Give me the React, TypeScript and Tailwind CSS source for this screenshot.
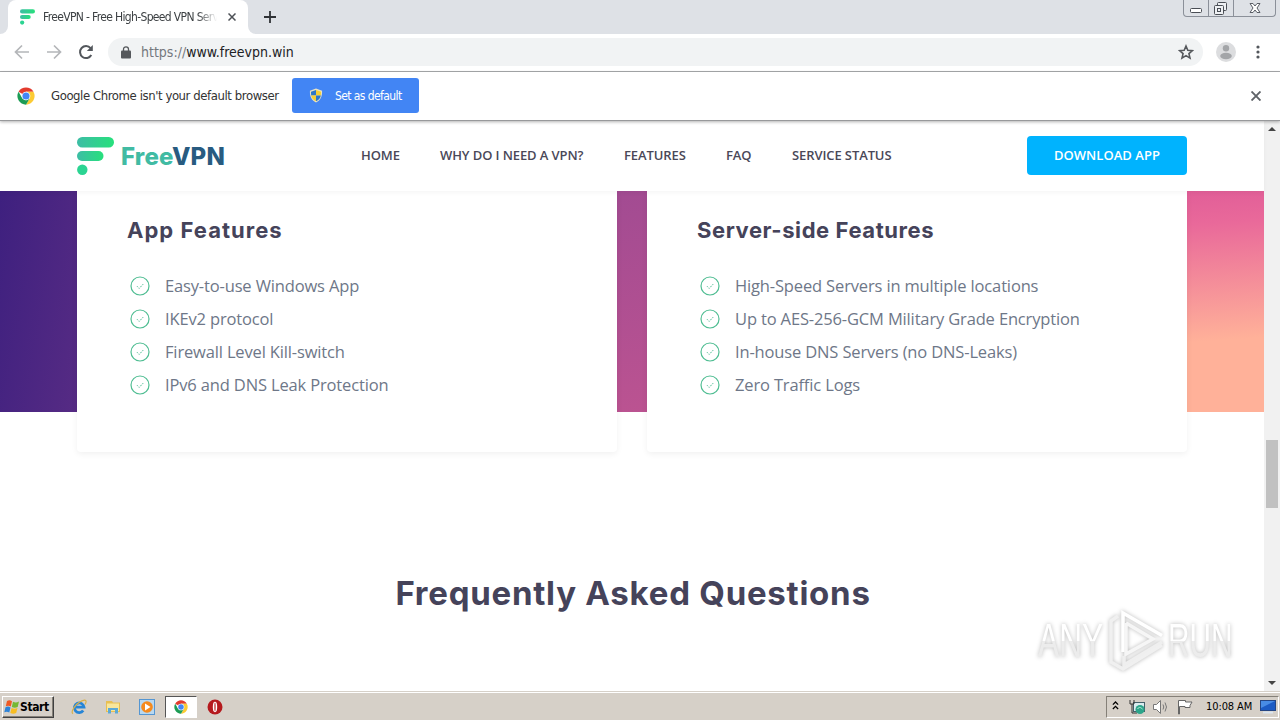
import type { ReactNode } from "react";

type FeatureCardProps = {
  title: string;
  titleClass: string;
  items: string[];
};

const NAV_ITEMS = [
  { label: "Home", className: "w-[79px]" },
  { label: "Why do I need a VPN?", className: "w-[184px]" },
  { label: "Features", className: "w-[102px]" },
  { label: "FAQ", className: "w-[66px]" },
  { label: "Service status", className: "w-[99px]" },
];

const APP_FEATURES = [
  "Easy-to-use Windows App",
  "IKEv2 protocol",
  "Firewall Level Kill-switch",
  "IPv6 and DNS Leak Protection",
];

const SERVER_FEATURES = [
  "High-Speed Servers in multiple locations",
  "Up to AES-256-GCM Military Grade Encryption",
  "In-house DNS Servers (no DNS-Leaks)",
  "Zero Traffic Logs",
];

function BrandMark({ className }: { className: string }) {
  return (
    <svg viewBox="0 0 37 38" className={className}>
      <defs>
        <linearGradient id="brand" x1="0" x2="1">
          <stop offset="0" stopColor="#3dbda5" />
          <stop offset="1" stopColor="#27e07c" />
        </linearGradient>
      </defs>
      <rect width="37" height="10.5" rx="5.2" fill="url(#brand)" />
      <rect y="14" width="26.5" height="10" rx="5" fill="url(#brand)" />
      <circle cx="5.3" cy="32.7" r="5.2" fill="#2bd492" />
    </svg>
  );
}

function ChromeLogo({ className }: { className: string }) {
  return (
    <svg viewBox="0 0 48 48" className={className}>
      <path d="M24 24 4.1 12.5A23 23 0 0 1 43.9 12.5H24z" fill="#e33b2e" />
      <path d="M24 12.5h19.9A23 23 0 0 1 24 47l10-17.2z" fill="#fccb34" />
      <path d="M4.1 12.5 14 29.8 24 35.5 34 29.8 24 47A23 23 0 0 1 4.1 12.5z" fill="#1c9c55" />
      <circle cx="24" cy="24" r="11.5" fill="#fff" />
      <circle cx="24" cy="24" r="9.5" fill="#4486f5" />
    </svg>
  );
}

function TabStrip() {
  return (
    <div className="flex h-[34px] bg-[#dee1e6]">
      <div className="h-full w-2 bg-white">
        <div className="h-full rounded-br-lg bg-[#dee1e6]" />
      </div>
      <div className="flex w-[240px] items-center rounded-t-lg bg-white pl-3">
        <BrandMark className="h-4 w-[15px]" />
        <div className="ml-2 w-[174px] text-[12px] whitespace-nowrap text-[#3c4043] [mask-image:linear-gradient(to_right,#000_155px,transparent_174px)]">
          <span className="tracking-[-0.65px]">FreeVPN - Free High-Speed VPN Serv</span>
        </div>
        <svg viewBox="0 0 8 8" className="ml-[11px] h-2 w-2" stroke="#4d5156" strokeWidth="1.5">
          <path d="M.5.5l7 7M7.5.5l-7 7" />
        </svg>
      </div>
      <div className="h-full w-2 bg-white">
        <div className="h-full rounded-bl-lg bg-[#dee1e6]" />
      </div>
      <svg viewBox="0 0 12 12" className="mt-[11px] ml-2 h-3 w-3" stroke="#2f3236" strokeWidth="1.8">
        <path d="M6 0v12M0 6h12" />
      </svg>
      <div className="mr-1 ml-auto flex h-[17px] w-[93px] rounded-b-[4px] border border-t-0 border-[#8b9099]">
        <div className="flex w-[25px] justify-center border-r border-[#8b9099]">
          <svg viewBox="0 0 24 16" className="h-4 w-6" fill="#fff" stroke="#4a4e55">
            <rect x="6.5" y="8.5" width="11" height="4" rx="1" />
          </svg>
        </div>
        <div className="flex w-[25px] justify-center border-r border-[#8b9099]">
          <svg viewBox="0 0 24 16" className="h-4 w-6" fill="#eef0f3" stroke="#4a4e55">
            <rect x="8.5" y="2.5" width="9" height="8" rx="1" />
            <rect x="5.5" y="5.5" width="9" height="9" rx="1" />
            <rect x="8.5" y="8.5" width="3" height="3" />
          </svg>
        </div>
        <div className="flex flex-1 justify-center">
          <svg viewBox="0 0 14 16" className="h-4 w-[14px]" fill="#fff" stroke="#5a5e66">
            <path d="M2 3.5h3l2 2.5 2-2.5h3L9 8l3 4.5H9L7 10l-2 2.500H2L5 8z" />
          </svg>
        </div>
      </div>
    </div>
  );
}

function Toolbar() {
  return (
    <div className="flex h-[38px] items-center border-b border-[#a9abad] bg-white pb-[1px] pl-[14px]">
      <svg viewBox="0 0 16 16" className="h-4 w-4" fill="none" stroke="#b4b6b9" strokeWidth="1.7">
        <path d="M15 8H2M8 1.5 1.5 8 8 14.5" />
      </svg>
      <svg viewBox="0 0 16 16" className="ml-4 h-4 w-4" fill="none" stroke="#b4b6b9" strokeWidth="1.7">
        <path d="M1 8h13M8 1.5 14.5 8 8 14.5" />
      </svg>
      <svg viewBox="0 0 16 16" className="ml-4 h-4 w-4" fill="none" stroke="#53575c" strokeWidth="2">
        <path d="M13.3 11A6 6 0 1 1 12.6 4.2" />
        <path d="M14.8 1v6H8.8z" fill="#53575c" stroke="none" />
      </svg>
      <div className="ml-[14px] flex h-7 w-[1095px] items-center rounded-full bg-[#f1f3f4] pl-[13px]">
        <svg viewBox="0 0 10 13" className="h-[13px] w-[10px]" fill="#55585c">
          <rect y="4.5" width="10" height="8" rx="1" />
          <path d="M2.5 5V3.3a2.5 2.5 0 0 1 5 0V5" fill="none" stroke="#55585c" strokeWidth="1.3" />
        </svg>
        <span className="ml-[10px] text-[14px] text-[#202124]">
          <span className="text-[#74787d]">https://</span>www.freevpn.win
        </span>
        <svg viewBox="0 0 24 24" className="mr-[9px] ml-auto h-4 w-4" fill="none" stroke="#55585c" strokeWidth="2.4">
          <path d="M12 3l2.700 6.300 6.900.6-5.200 4.500 1.600 6.700-6-3.600-6 3.600 1.600-6.700L2.400 9.900l6.900-.6z" />
        </svg>
      </div>
      <svg viewBox="0 0 20 20" className="ml-[13px] h-5 w-5">
        <circle cx="10" cy="10" r="10" fill="#dcdddf" />
        <circle cx="10" cy="6.3" r="3.2" fill="#a3a5a8" />
        <ellipse cx="10" cy="14" rx="5.8" ry="3.2" fill="#a3a5a8" />
      </svg>
      <svg viewBox="0 0 4 14" className="ml-5 h-[14px] w-1" fill="#53575c">
        <circle cx="2" cy="2" r="1.6" />
        <circle cx="2" cy="7" r="1.6" />
        <circle cx="2" cy="12" r="1.6" />
      </svg>
    </div>
  );
}

function DefaultBrowserBar() {
  return (
    <div className="relative z-10 flex h-[49px] items-center border-b border-[#98999b] bg-white pb-[1px] pl-[17px] shadow-[0_1px_3px_rgba(0,0,0,0.3)]">
      <ChromeLogo className="h-[18px] w-[18px]" />
      <span className="ml-4 w-[241px] text-[13px] tracking-[-0.42px] whitespace-nowrap text-[#333]">
        Google Chrome isn't your default browser
      </span>
      <button type="button" className="flex h-[35px] w-[127px] items-center rounded-[3px] bg-[#4285f4] pl-[17px] text-white">
        <svg viewBox="0 0 14 16" className="h-[15px] w-[14px]">
          <path d="M7 .5 13.500 3c.2 6-1.500 10-6.500 12.500C2 13 .3 9 .5 3z" fill="#e9e3c4" />
          <path d="M7 2v6H1.800L1.600 4z" fill="#2d77c9" />
          <path d="M7 2v6h5.200l.2-4z" fill="#f5cf35" />
          <path d="M7 8v6.200C4.200 12.700 2.500 11 1.800 8z" fill="#f5cf35" />
          <path d="M7 8v6.200C9.800 12.700 11.500 11 12.200 8z" fill="#2d77c9" />
        </svg>
        <span className="ml-3 text-[12px] tracking-[-0.58px] whitespace-nowrap">Set as default</span>
      </button>
      <svg viewBox="0 0 10 10" className="mr-[19px] ml-auto h-[10px] w-[10px]" stroke="#5f6368" strokeWidth="1.9">
        <path d="M.5.5l9 9M9.5.5l-9 9" />
      </svg>
    </div>
  );
}

function SiteHeader() {
  return (
    <header className="relative flex h-[70px] shrink-0 items-center bg-white pb-[1px] pl-[77px] shadow-[0_2px_5px_rgba(0,0,0,0.04)]">
      <BrandMark className="h-[38px] w-[37px]" />
      <div className="ml-[7px] w-[240px] pt-[2px] font-[Inter] text-[24px] leading-[38px] font-extrabold tracking-[0.15px]">
        <span className="text-[#41bba3]">Free</span>
        <span className="text-[#285b80]">VPN</span>
      </div>
      <nav className="flex pt-[1px] font-['Open_Sans'] text-[13px] font-semibold tracking-[-0.1px] whitespace-nowrap text-[#4a4858] uppercase">
        {NAV_ITEMS.map((item) => (
          <a key={item.label} className={item.className}>
            {item.label}
          </a>
        ))}
      </nav>
      <a className="ml-[136px] flex h-[39px] w-[160px] items-center justify-center rounded-[4px] bg-[#00b3fe] font-['Open_Sans'] text-[13px] font-semibold tracking-[0.05px] text-white uppercase">
        Download App
      </a>
    </header>
  );
}

function FeatureCard({ title, titleClass, items }: FeatureCardProps) {
  return (
    <div className="h-[261px] w-[540px] rounded-b-[4px] bg-white px-[50px] pt-[26px] shadow-[0_2px_6px_rgba(0,0,0,0.06)]">
      <h3 className={`font-[Inter] text-[22px] leading-[26px] font-bold whitespace-nowrap text-[#45435a] ${titleClass}`}>
        {title}
      </h3>
      <ul className="mt-[26px] font-['Open_Sans'] text-[16.5px] leading-[33px] tracking-[-0.15px] whitespace-nowrap text-[#6e7788]">
        {items.map((item) => (
          <li key={item} className="flex items-center pl-[3px]">
            <svg viewBox="0 0 20 20" className="h-5 w-5" fill="none" stroke="#4fbd92">
              <circle cx="10" cy="10" r="9" strokeWidth="1.2" />
              <path d="M7 10.2l2.2 2.2 4.3-4.6" strokeDasharray="1.5 1" />
            </svg>
            <span className="ml-[15px]">{item}</span>
          </li>
        ))}
      </ul>
    </div>
  );
}

function Scrollbar() {
  return (
    <div className="flex w-4 flex-col items-center bg-[#f1f1f1]">
      <svg viewBox="0 0 16 16" className="h-4 w-4" fill="#454545">
        <path d="M4 10l4-4 4 4z" />
      </svg>
      <div className="mt-[303px] h-[68px] w-3 bg-[#c1c1c1]" />
      <svg viewBox="0 0 16 16" className="mt-auto h-4 w-4" fill="#454545">
        <path d="M4 6l4 4 4-4z" />
      </svg>
    </div>
  );
}

function QuickLaunch({ children, active }: { children: ReactNode; active?: boolean }) {
  return (
    <div
      className={`flex h-[22px] w-8 items-center justify-center ${
        active ? "border border-t-[#555] border-r-white border-b-white border-l-[#555] bg-white" : ""
      }`}
    >
      {children}
    </div>
  );
}

function Taskbar() {
  return (
    <div className="flex h-7 items-center border-t border-white bg-[#d6d0c8] pr-[1px] pl-[2px]">
      <div className="flex h-[22px] w-[52px] items-center border border-t-white border-r-[#404040] border-b-[#404040] border-l-white pl-[1px] shadow-[inset_-1px_-1px_0_#858078]">
        <svg viewBox="0 0 16 16" className="h-4 w-4">
          <path d="M3 2c2-1.200 3.500-.8 5 .2L6.800 7.500c-1.600-1-3.200-1.200-5-.2z" fill="#ef5a25" />
          <path d="M9 2.800c2 1 3.600 1 6-.2L13.700 8c-2 1-3.800 1-5.900 0z" fill="#75b832" />
          <path d="M1.500 8.200c2-1 3.500-.8 5 .2L5.300 13.500c-1.600-1-3.200-1.200-5-.2z" fill="#2d83d8" />
          <path d="M7.600 9c2 1 3.600 1 5.900 0l-1.300 5c-2 1-3.800 1-5.900 0z" fill="#f7bd22" />
        </svg>
        <span className="text-[12px] font-bold tracking-[-0.4px] text-black">Start</span>
      </div>
      <div className="ml-[9px] flex items-center gap-[2px]">
        <QuickLaunch>
          <svg viewBox="0 0 16 16" className="h-4 w-4" fill="none">
            <path d="M12.200 11.500A4.800 4.800 0 1 1 13 8.200H5" stroke="#2685d6" strokeWidth="2.8" />
            <path d="M2 14.800C-1.500 13 6 2.500 13.500 1.200c2.500-.2 1.500 2.800.5 4.300" stroke="#d9b048" strokeWidth="1.2" />
          </svg>
        </QuickLaunch>
        <QuickLaunch>
          <svg viewBox="0 0 16 16" className="h-4 w-4">
            <path d="M1 2h6l1 1.500h7V13H1z" fill="#e8bf52" />
            <path d="M2 4.500h12V12H2z" fill="#f8e69b" />
            <path d="M3 14.500V9h10v5.500h-3V11H6v3.500z" fill="#5ca9d6" />
          </svg>
        </QuickLaunch>
        <QuickLaunch>
          <svg viewBox="0 0 16 16" className="h-4 w-4">
            <rect x=".5" y=".5" width="15" height="15" fill="#b8d8f0" stroke="#5596d2" />
            <circle cx="8" cy="8" r="5.8" fill="#f58a1d" />
            <path d="M6 4.500 11.500 8 6 11.500z" fill="#fff" />
          </svg>
        </QuickLaunch>
        <QuickLaunch active>
          <ChromeLogo className="h-[14px] w-[14px]" />
        </QuickLaunch>
        <QuickLaunch>
          <svg viewBox="0 0 16 16" className="h-4 w-4">
            <circle cx="8" cy="8" r="7.5" fill="#b5191d" />
            <ellipse cx="8" cy="8" rx="2.2" ry="5.2" fill="#fff" />
            <ellipse cx="8" cy="8" rx=".7" ry="4.4" fill="#c43a3a" />
          </svg>
        </QuickLaunch>
      </div>
      <div className="ml-auto flex h-[22px] w-[173px] items-center border border-t-[#858078] border-r-white border-b-white border-l-[#858078] pl-[5px]">
        <svg viewBox="0 0 8 10" className="mb-[3px] h-[9px] w-[7px]" fill="none" stroke="#000" strokeWidth="1.5">
          <path d="M1 4l3-3 3 3M1 9l3-3 3 3" />
        </svg>
        <svg viewBox="0 0 16 16" className="ml-[10px] h-4 w-4">
          <rect x="4.5" y="3.5" width="11" height="9" fill="#d9ecef" stroke="#44606a" />
          <path d="M1 1v4h4V1M3 5v9h5" fill="none" stroke="#333" />
          <circle cx="11" cy="10.5" r="4.5" fill="#2ca58a" />
          <path d="M8.500 10c2-3 3.500-1 5 0" fill="none" stroke="#bdf0dc" />
        </svg>
        <svg viewBox="0 0 16 16" className="ml-2 h-4 w-4" fill="#fff" stroke="#777">
          <path d="M.5 5.500h3l4-4v13l-4-4h-3z" />
          <path d="M10 5.500q1.500 2.500 0 5M12 3.500q3 4.500 0 9" fill="none" />
        </svg>
        <svg viewBox="0 0 16 16" className="ml-2 h-4 w-4" fill="#fff" stroke="#666">
          <path d="M1.500 15V1.500h7v1.500h6.500l-2 3.500 0 2H8V7.500H2.500V15z" />
        </svg>
        <span className="ml-[13px] w-[53px] pt-[2px] text-[11px] tracking-[-0.1px] whitespace-nowrap text-black">10:08 AM</span>
        <svg viewBox="0 0 16 14" className="mr-[2px] ml-auto h-[14px] w-4">
          <rect x=".5" y=".5" width="15" height="10" fill="#1c5bc4" stroke="#254684" />
          <path d="M1 1h14L1 8z" fill="#488ce5" />
          <path d="M3 12.500h10" stroke="#dbe5ef" strokeWidth="2" />
        </svg>
      </div>
    </div>
  );
}

function Watermark() {
  return (
    <div className="absolute top-[608px] left-[1038px] flex h-[66px] w-[200px] items-center font-['Liberation_Sans_Narrow','Liberation_Sans',sans-serif] text-white [filter:drop-shadow(0_0_2px_rgba(0,0,0,0.28))]">
      <div className="w-[66px]">
        <span className="inline-block origin-left scale-x-[0.66] bg-linear-to-b from-white from-50% to-[#ececec] to-50% bg-clip-text text-[48px] text-transparent">
          ANY
        </span>
      </div>
      <svg viewBox="0 0 62 66" className="h-[66px] w-[62px]" fill="none" strokeWidth="3.5">
        <path d="M19 44V5l39 22.500" stroke="#fff" />
        <path d="M22 15v31l27-15L22 15" stroke="#f6f6f6" />
        <path d="M58 34 20 57v-9" stroke="#efefef" />
        <path d="M14 8 7 13v41l12 7 39-24" stroke="#f0f0f0" />
      </svg>
      <div className="ml-[2px] w-[66px]">
        <span className="inline-block origin-left scale-x-[0.62] bg-linear-to-b from-white from-50% to-[#ececec] to-50% bg-clip-text text-[48px] text-transparent">
          RUN
        </span>
      </div>
    </div>
  );
}

export default function App() {
  return (
    <div className="relative flex h-[720px] w-[1280px] flex-col overflow-hidden bg-white font-[Tahoma,'DejaVu_Sans_Condensed','DejaVu_Sans',sans-serif]">
      <TabStrip />
      <Toolbar />
      <DefaultBrowserBar />
      <div className="flex h-[571px] border-b border-[#d6d0c8]">
        <main className="flex flex-1 flex-col bg-white">
          <SiteHeader />
          <section className="flex h-[221px] shrink-0 items-start gap-[30px] bg-[linear-gradient(176deg,#e15e98_0,#e9699a_15%,#ffb199_67%),linear-gradient(170deg,#a24b92,#bb5391),linear-gradient(100deg,#3e207f,#562b84)] bg-[size:77px_100%,30px_100%,77px_100%] bg-[position:right,617px_0,left] bg-no-repeat pl-[77px]">
            <FeatureCard title="App Features" titleClass="tracking-[1.03px]" items={APP_FEATURES} />
            <FeatureCard title="Server-side Features" titleClass="tracking-[0.58px]" items={SERVER_FEATURES} />
          </section>
          <h2 className="mt-[160px] pl-[2px] text-center font-[Inter] text-[33px] leading-[42px] font-bold tracking-[0.75px] text-[#45435a]">
            Frequently Asked Questions
          </h2>
        </main>
        <Scrollbar />
      </div>
      <Taskbar />
      <Watermark />
    </div>
  );
}
